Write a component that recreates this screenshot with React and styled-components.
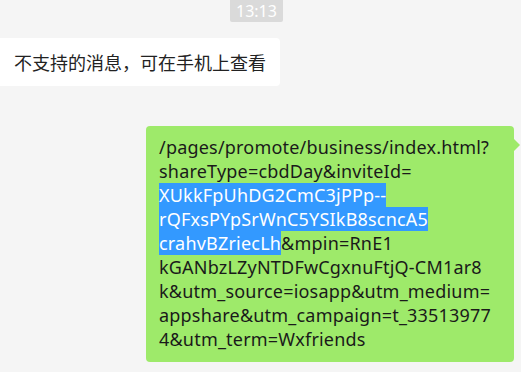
import React from "react";
import styled, { createGlobalStyle } from "styled-components";

const Global = createGlobalStyle`
  html, body { margin: 0; padding: 0; background: #f5f5f5; }
  body { width: 521px; height: 372px; overflow: hidden; }
`;

const Page = styled.div`
  width: 521px;
  height: 372px;
  background: #f5f5f5;
  display: flex;
  flex-direction: column;
  font-family: "Noto Sans", "Noto Sans CJK SC", sans-serif;
`;

const TimeRow = styled.div`
  display: flex;
  justify-content: flex-start;
  padding-left: 230px;
`;

const TimeBadge = styled.div`
  background: #dadada;
  color: #fff;
  font-size: 16px;
  line-height: 22px;
  height: 22px;
  padding: 0 6px;
  border-radius: 0 0 2px 2px;
  font-family: "Noto Sans", sans-serif;
`;

const LeftRow = styled.div`
  display: flex;
  margin-top: 16px;
`;

const LeftBubble = styled.div`
  background: #fff;
  width: 280px;
  height: 48px;
  box-sizing: border-box;
  padding-left: 14px;
  display: flex;
  align-items: center;
  border-radius: 0 4px 4px 0;
  color: #222;
  font-size: 18px;
  font-family: "Noto Sans CJK SC", sans-serif;
`;

const RightRow = styled.div`
  display: flex;
  justify-content: flex-end;
  margin-top: 40px;
  padding-right: 7px;
`;

const GreenBubble = styled.div`
  position: relative;
  background: #9eea6a;
  width: 368px;
  box-sizing: border-box;
  padding: 9px 0 11px 13px;
  border-radius: 4px;
  color: #1a1a1a;
  font-size: 18px;
  letter-spacing: 0.2px;
  font-family: "Noto Sans", "Open Sans", sans-serif;
  &::after {
    content: "";
    position: absolute;
    right: -6px;
    top: 13px;
    border-style: solid;
    border-width: 6px 0 6px 6px;
    border-color: transparent transparent transparent #9eea6a;
  }
`;

const Line = styled.div`
  line-height: 24px;
  height: 24px;
  white-space: pre;
`;

const Sel = styled.span`
  display: inline-block;
  background: #3399ff;
  color: #fff;
  line-height: 24px;
`;

const lines = [
  [["/pages/promote/business/index.html?", false]],
  [["shareType=cbdDay&inviteId=", false]],
  [["XUkkFpUhDG2CmC3jPPp--", true]],
  [["rQFxsPYpSrWnC5YSIkB8scncA5", true]],
  [["crahvBZriecLh", true], ["&mpin=RnE1", false]],
  [["kGANbzLZyNTDFwCgxnuFtjQ-CM1ar8", false]],
  [["k&utm_source=iosapp&utm_medium=", false]],
  [["appshare&utm_campaign=t_33513977", false]],
  [["4&utm_term=Wxfriends", false]],
];

export default function App() {
  return (
    <Page>
      <Global />
      <TimeRow>
        <TimeBadge>13:13</TimeBadge>
      </TimeRow>
      <LeftRow>
        <LeftBubble>不支持的消息，可在手机上查看</LeftBubble>
      </LeftRow>
      <RightRow>
        <GreenBubble>
          {lines.map((parts, i) => (
            <Line key={i}>
              {parts.map(([t, s], j) =>
                s ? <Sel key={j}>{t}</Sel> : <span key={j}>{t}</span>
              )}
            </Line>
          ))}
        </GreenBubble>
      </RightRow>
    </Page>
  );
}
